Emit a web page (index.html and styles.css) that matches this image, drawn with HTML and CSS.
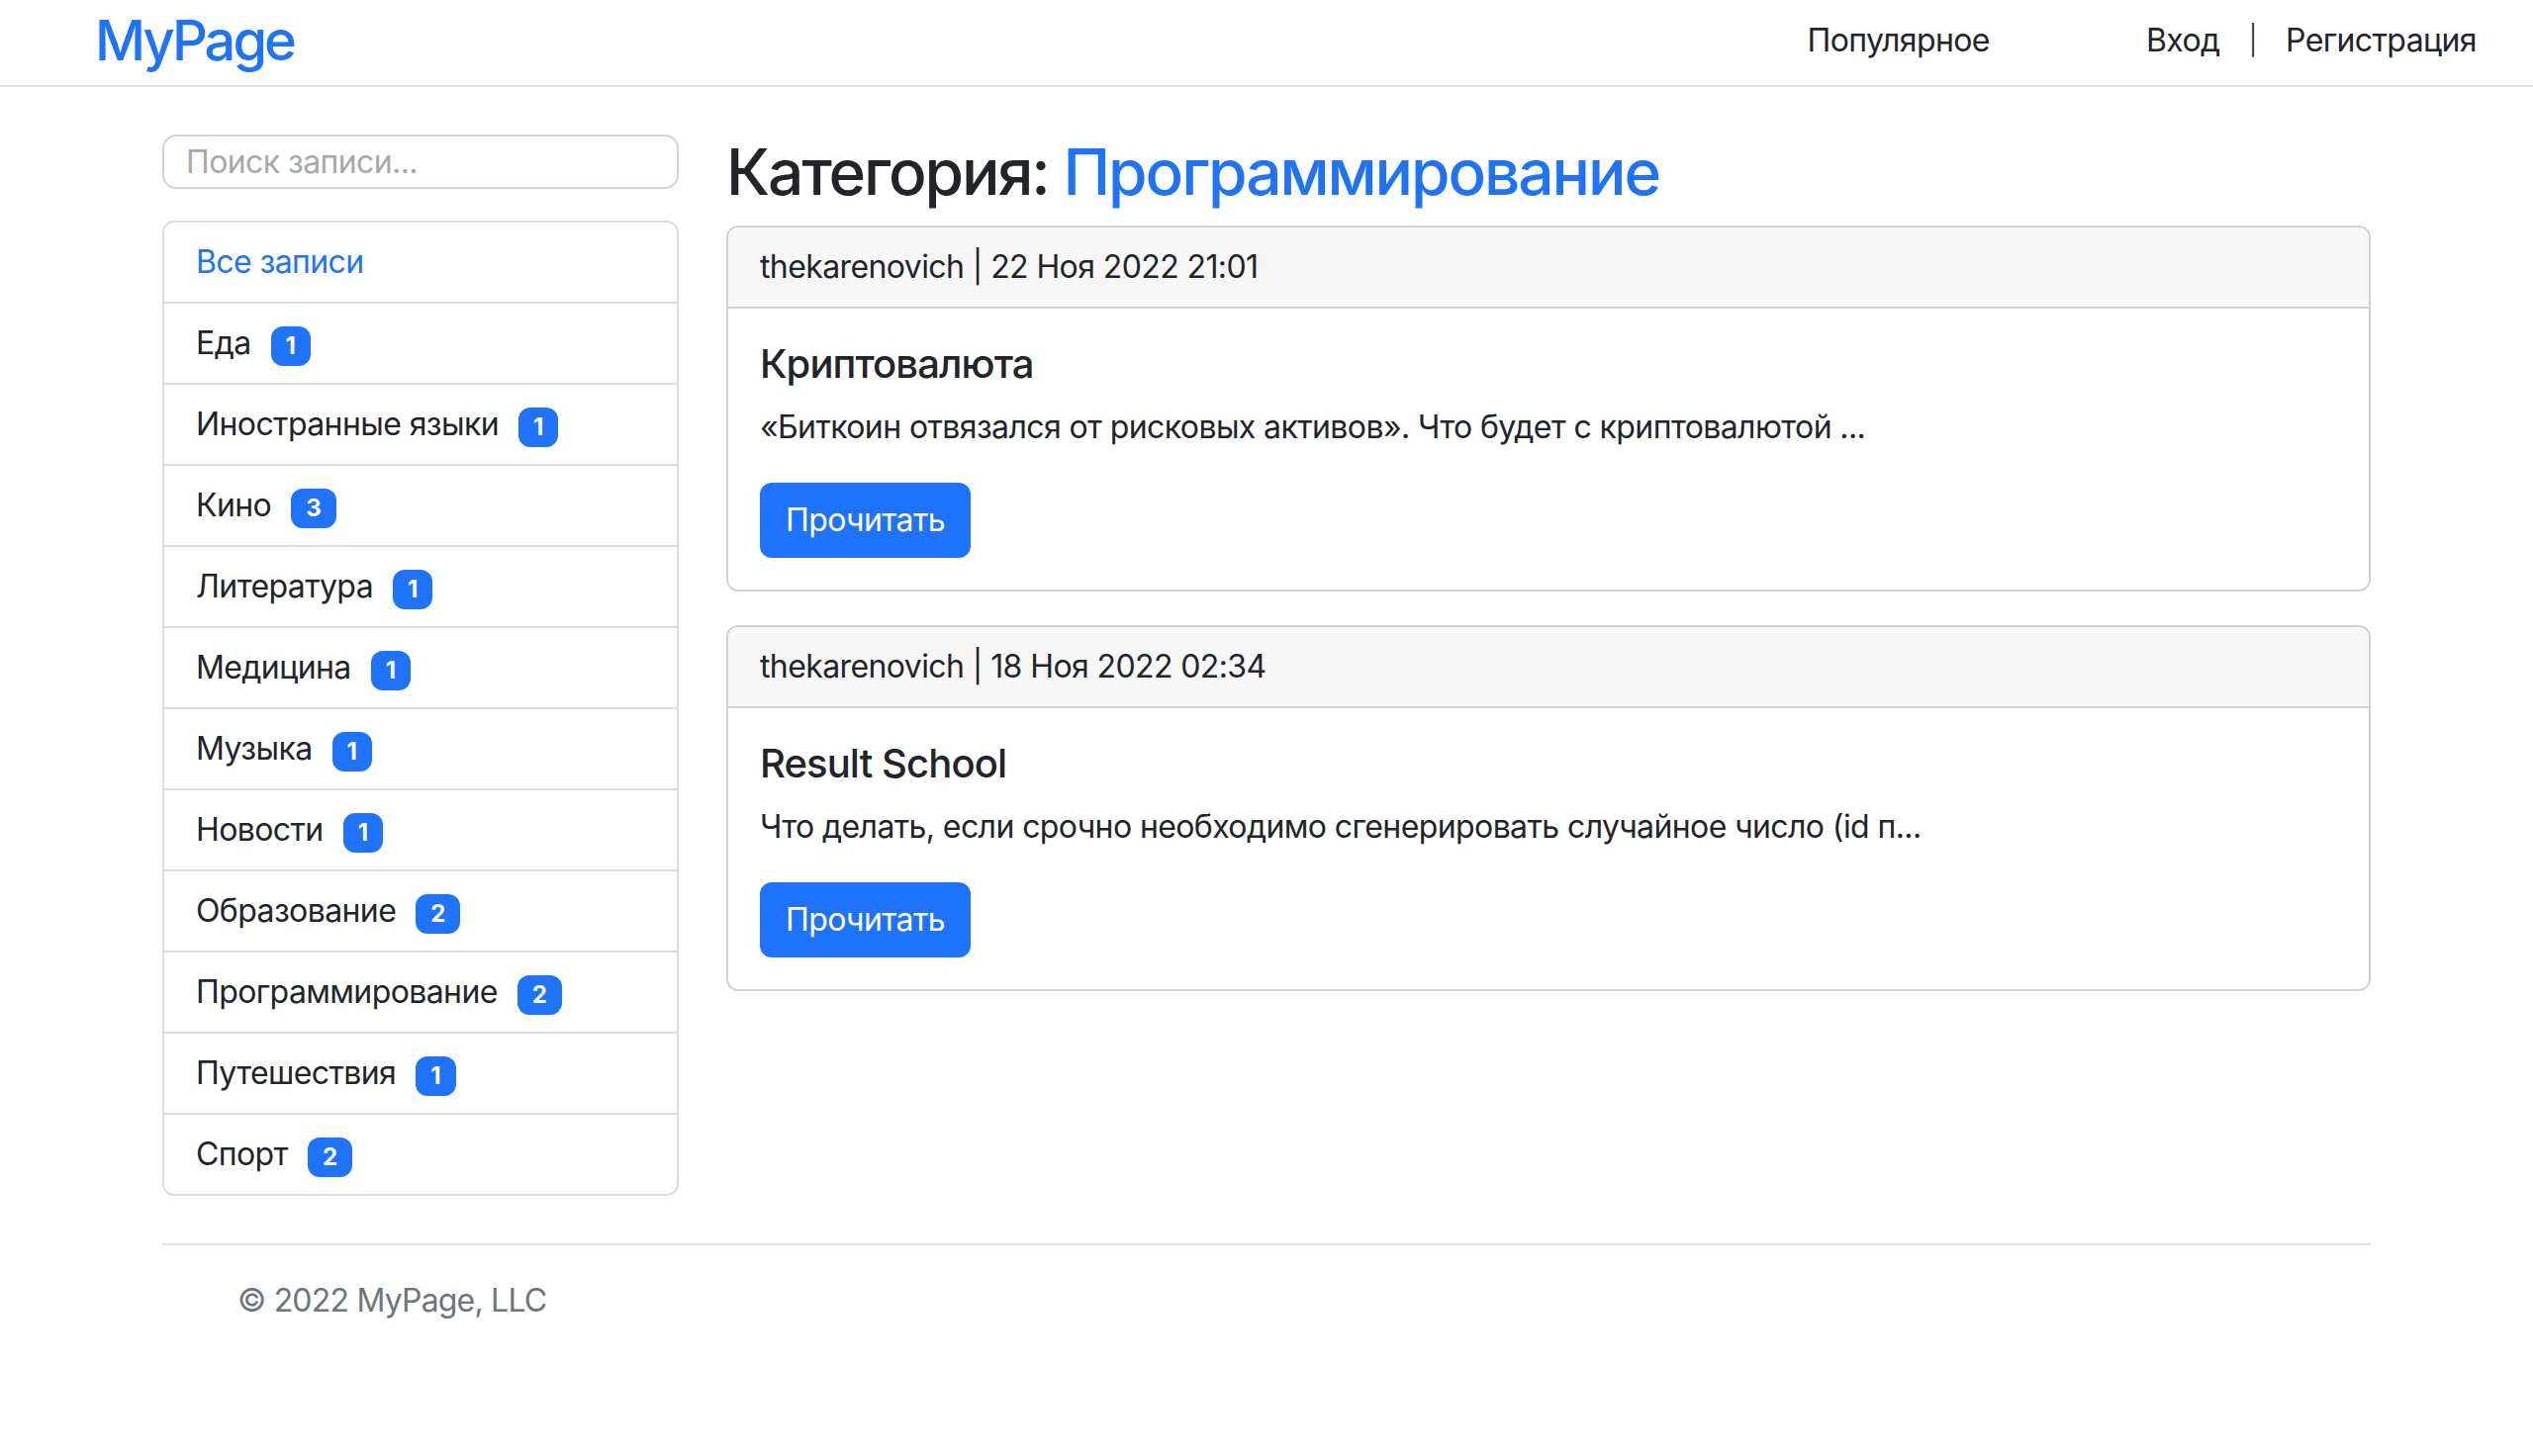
FILE: index.html
```html
<!DOCTYPE html>
<html lang="ru">
<head>
<meta charset="utf-8">
<title>MyPage — Программирование</title>
<link rel="stylesheet" href="styles.css">
</head>
<body>
<header class="topbar">
  <a class="brand" href="#">MyPage</a>
  <nav class="topnav">
    <a class="nav-link" href="#">Популярное</a>
    <div class="auth">
      <a class="nav-link" href="#">Вход</a>
      <span class="sep">|</span>
      <a class="nav-link" href="#">Регистрация</a>
    </div>
  </nav>
</header>

<main class="container">
  <div class="layout">
    <aside class="sidebar">
      <input class="search" type="search" placeholder="Поиск записи...">
      <ul class="cats">
        <li class="cat cat-all"><a href="#">Все записи</a></li>
        <li class="cat">Еда<span class="badge">1</span></li>
        <li class="cat">Иностранные языки<span class="badge">1</span></li>
        <li class="cat">Кино<span class="badge">3</span></li>
        <li class="cat">Литература<span class="badge">1</span></li>
        <li class="cat">Медицина<span class="badge">1</span></li>
        <li class="cat">Музыка<span class="badge">1</span></li>
        <li class="cat">Новости<span class="badge">1</span></li>
        <li class="cat">Образование<span class="badge">2</span></li>
        <li class="cat">Программирование<span class="badge">2</span></li>
        <li class="cat">Путешествия<span class="badge">1</span></li>
        <li class="cat">Спорт<span class="badge">2</span></li>
      </ul>
    </aside>

    <section class="content">
      <h2 class="page-title">Категория: <span class="accent">Программирование</span></h2>

      <article class="card">
        <div class="card-header">thekarenovich | 22 Ноя 2022 21:01</div>
        <div class="card-body">
          <h5 class="card-title">Криптовалюта</h5>
          <p class="card-text">«Биткоин отвязался от рисковых активов». Что будет с криптовалютой ...</p>
          <a class="btn" href="#">Прочитать</a>
        </div>
      </article>

      <article class="card">
        <div class="card-header">thekarenovich | 18 Ноя 2022 02:34</div>
        <div class="card-body">
          <h5 class="card-title">Result School</h5>
          <p class="card-text">Что делать, если срочно необходимо сгенерировать случайное число (id п...</p>
          <a class="btn" href="#">Прочитать</a>
        </div>
      </article>
    </section>
  </div>

  <footer class="footer">
    <span class="copy">© 2022 MyPage, LLC</span>
  </footer>
</main>
</body>
</html>
```

FILE: styles.css
```css
* { box-sizing: border-box; }

html, body {
  margin: 0;
  padding: 0;
  background: #ffffff;
}

body {
  font-family: Inter, "Noto Sans", "Liberation Sans", sans-serif;
  font-size: 32px;
  line-height: 48px;
  letter-spacing: -0.6px;
  color: #212529;
}

a { text-decoration: none; color: inherit; }

/* Header */
.topbar {
  height: 88px;
  border-bottom: 2px solid #dee2e6;
  display: flex;
  align-items: center;
  justify-content: space-between;
  padding: 0 57px 4px 96px;
}

.brand {
  font-size: 56px;
  font-weight: 500;
  line-height: 1;
  color: #1e73fa;
  letter-spacing: -3px;
}

.topnav {
  display: flex;
  align-items: center;
  gap: 158px;
}

.auth {
  display: flex;
  align-items: center;
}

.sep {
  margin: 0 29px 0 29px;
  font-size: 29px;
  font-weight: 300;
}

.nav-link { color: #212529; }

/* Layout */
.container {
  width: 2232px;
  margin: 0 auto;
  padding-top: 48px;
}

.layout {
  display: grid;
  grid-template-columns: 522px 1662px;
  column-gap: 48px;
  align-items: start;
}

/* Sidebar */
.search {
  display: block;
  width: 100%;
  height: 55px;
  margin: 0 0 32px 0;
  padding: 0 22px;
  border: 2px solid #d3d3d3;
  border-radius: 14px;
  font-family: inherit;
  font-size: 32px;
  letter-spacing: -0.6px;
  color: #212529;
  background: #fff;
  outline: none;
}

.search::placeholder { color: #a8a8a8; }

.cats {
  list-style: none;
  margin: 0;
  padding: 0;
  border: 2px solid #dddddd;
  border-radius: 12px;
  overflow: hidden;
}

.cat {
  padding: 16px 32px;
  border-top: 2px solid #dddddd;
  line-height: 48px;
}

.cat:first-child { border-top: 0; }

.cat-all a { color: #1e73fa; }

.badge {
  display: inline-block;
  margin-left: 20px;
  padding: 8px 15px 8px 15px;
  font-size: 24px;
  font-weight: 700;
  line-height: 1;
  letter-spacing: 0;
  color: #ffffff;
  background: #1e73fa;
  border-radius: 12px;
  vertical-align: baseline;
}

/* Content */
.page-title {
  margin: 0 0 16px 0;
  font-size: 64px;
  font-weight: 500;
  line-height: 76px;
  letter-spacing: -2.1px;
  color: #212529;
}

.accent { color: #1e73fa; }

.card {
  border: 2px solid #d2d2d2;
  border-radius: 12px;
  margin-bottom: 34px;
  overflow: hidden;
}

.card-header {
  padding: 16px 32px;
  background: #f7f7f7;
  border-bottom: 2px solid #d2d2d2;
}

.card-body {
  padding: 32px;
}

.card-title {
  margin: 0 0 16px 0;
  font-size: 40px;
  font-weight: 500;
  line-height: 48px;
  letter-spacing: -0.9px;
}

.card-text {
  margin: 0 0 32px 0;
}

.btn {
  display: inline-block;
  padding: 12px 24px;
  border: 2px solid #1e73fa;
  border-radius: 12px;
  background: #1e73fa;
  color: #ffffff;
  line-height: 48px;
}

/* Footer */
.footer {
  margin-top: 48px;
  border-top: 2px solid #dee2e6;
  padding: 32px 0 32px 76px;
}

.copy {
  color: #6c757d;
  letter-spacing: -0.8px;
}
```
